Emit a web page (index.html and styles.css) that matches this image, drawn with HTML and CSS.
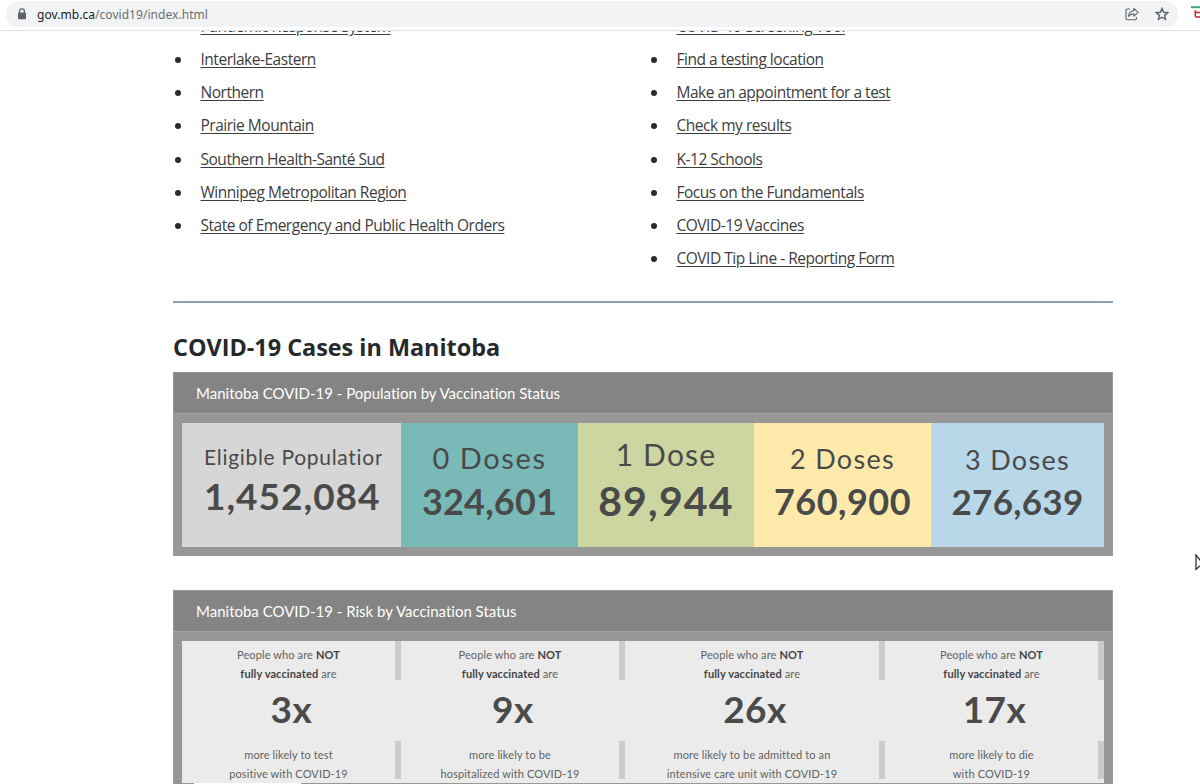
FILE: index.html
```
<!DOCTYPE html>
<html lang="en">
<head>
    <meta charset="UTF-8">
    <title>COVID-19 - Province of Manitoba</title>
    <link rel="stylesheet" href="styles.css">
</head>
<body>
    <header class="toolbar">
        <div class="address-bar">
            <svg class="lock" width="10" height="12" viewBox="0 0 10 12">
                <path d="M2.6 5V3.2a2.4 2.4 0 0 1 4.8 0V5" fill="none" stroke="#5f6368" stroke-width="1.3"/>
                <rect x="1" y="4.4" width="8" height="6.8" rx="0.8" fill="#5f6368"/>
            </svg>
            <span class="url"><b>gov.mb.ca</b>/covid19/index.html</span>
            <svg class="share" width="14" height="14" viewBox="0 0 14 14" fill="none" stroke="#5f6368" stroke-width="1.1" stroke-linejoin="round">
                <path d="M5 2H2.200A1.200 1.200 0 0 0 1 3.200v8.300a1.200 1.200 0 0 0 1.200 1.200h8a1.200 1.200 0 0 0 1.200-1.200V10"/>
                <path d="M8.800 1.500l4.400 3.800-4.400 3.800V6.900C6.300 6.800 4.800 7.700 3.500 9.400 3.800 6.200 5.600 4 8.800 3.700z"/>
            </svg>
            <svg class="star" width="14" height="14" viewBox="0 0 14 14" fill="none" stroke="#5f6368" stroke-width="1.4" stroke-linejoin="miter">
                <path d="M7 1.500l1.600 3.800 4.100.35-3.100 2.700.93 4L7 10.200l-3.530 2.150.93-4-3.100-2.700 4.100-.35z"/>
            </svg>
        </div>
        <svg class="extension" width="9" height="14" viewBox="0 0 9 14" fill="none">
            <path d="M0 1.200h9" stroke="#3fa37c" stroke-width="2"/>
            <path d="M3.700 4.500l1.500 2h4M4.300 5v5q0 1 1.500 1h4" stroke="#c0272d" stroke-width="1.500"/>
        </svg>
    </header>

    <main class="page">
        <div class="columns">
            <ul class="links">
                <li><a href="#">Pandemic Response System</a></li>
                <li><a href="#">Interlake-Eastern</a></li>
                <li><a href="#">Northern</a></li>
                <li><a href="#">Prairie Mountain</a></li>
                <li><a href="#">Southern Health-Santé Sud</a></li>
                <li><a href="#">Winnipeg Metropolitan Region</a></li>
                <li><a href="#">State of Emergency and Public Health Orders</a></li>
            </ul>
            <ul class="links">
                <li><a href="#">COVID-19 Screening Tool</a></li>
                <li><a href="#">Find a testing location</a></li>
                <li><a href="#">Make an appointment for a test</a></li>
                <li><a href="#">Check my results</a></li>
                <li><a href="#">K-12 Schools</a></li>
                <li><a href="#">Focus on the Fundamentals</a></li>
                <li><a href="#">COVID-19 Vaccines</a></li>
                <li><a href="#">COVID Tip Line - Reporting Form</a></li>
            </ul>
        </div>

        <h2>COVID-19 Cases in Manitoba</h2>

        <section class="panel population">
            <h3 class="population-title">Manitoba COVID-19 - Population by Vaccination Status</h3>
            <div class="doses">
                <div class="dose eligible">
                    <span class="label">Eligible Population</span>
                    <span class="count">1,452,084</span>
                </div>
                <div class="dose zero">
                    <span class="label">0 Doses</span>
                    <span class="count">324,601</span>
                </div>
                <div class="dose one">
                    <span class="label">1 Dose</span>
                    <span class="count">89,944</span>
                </div>
                <div class="dose two">
                    <span class="label">2 Doses</span>
                    <span class="count">760,900</span>
                </div>
                <div class="dose three">
                    <span class="label">3 Doses</span>
                    <span class="count">276,639</span>
                </div>
            </div>
        </section>

        <section class="panel risk">
            <h3>Manitoba COVID-19 - Risk by Vaccination Status</h3>
            <div class="risks">
                <div class="risk-card">
                    <p class="who">People who are <b>NOT</b><br><b>fully vaccinated</b> are</p>
                    <p class="times">3x</p>
                    <p class="outcome">more likely to test<br>positive with COVID-19</p>
                </div>
                <div class="risk-card">
                    <p class="who">People who are <b>NOT</b><br><b>fully vaccinated</b> are</p>
                    <p class="times">9x</p>
                    <p class="outcome">more likely to be<br>hospitalized with COVID-19</p>
                </div>
                <div class="risk-card">
                    <p class="who">People who are <b>NOT</b><br><b>fully vaccinated</b> are</p>
                    <p class="times">26x</p>
                    <p class="outcome">more likely to be admitted to an<br>intensive care unit with COVID-19</p>
                </div>
                <div class="risk-card">
                    <p class="who">People who are <b>NOT</b><br><b>fully vaccinated</b> are</p>
                    <p class="times">17x</p>
                    <p class="outcome">more likely to die<br>with COVID-19</p>
                </div>
            </div>
            <div class="tab"></div>
        </section>
    </main>

    <!-- Mouse pointer -->
    <svg class="pointer" width="5" height="18" viewBox="0 0 5 18">
        <path d="M1 1v14.500l3.400-3.100H10z" fill="#fff" stroke="#222" stroke-width="1.200"/>
    </svg>
</body>
</html>
```
FILE: styles.css
```
body {
    font-family: "Open Sans", sans-serif;
    color: #2b2b2b;
    background-color: #fff;
    margin: 0;
    height: 784px;
    display: flex;
    flex-direction: column;
    overflow: hidden;
}

/* Browser bar */
.toolbar {
    flex: none;
    display: flex;
    align-items: flex-start;
    height: 30px;
    border-bottom: 1px solid #dfe1e4;
}

.address-bar {
    display: flex;
    align-items: center;
    box-sizing: border-box;
    width: 1172px;
    height: 26px;
    margin: 1px 13px 0 6px;
    padding: 0 9px 0 11px;
    border-radius: 13px;
    background-color: #f1f3f4;
}

.url {
    flex: 1;
    margin-left: 10px;
    font-family: "Noto Sans", sans-serif;
    font-size: 12px;
    letter-spacing: 0.05px;
    color: #6b6f73;
}

.url b {
    font-weight: normal;
    color: #202124;
}

.star {
    margin-left: 16px;
}

.extension {
    margin-top: 6px;
}

.page {
    flex: 1;
    width: 940px;
    margin-left: 173px;
    overflow: hidden;
}

.columns {
    display: grid;
    grid-template-columns: 476px 1fr;
    box-sizing: border-box;
    height: 272px;
    border-bottom: 2px solid #8ba0b6;
}

.links {
    margin: -21.5px 0 0;
    padding: 0;
    list-style: none;
}

.links li {
    display: flex;
    align-items: center;
    height: 33.15px;
    font-size: 15.5px;
    white-space: nowrap;
}

.links li::before {
    content: "";
    width: 6px;
    height: 6px;
    margin: 2px 19.5px 0 2px;
    border-radius: 50%;
    background-color: #2b2b2b;
}

.links a {
    color: #3d3d3d;
    letter-spacing: -0.48px;
    text-underline-offset: 2px;
}

h2 {
    margin: 28px 0 9px;
    font-size: 23.4px;
    line-height: 32px;
    font-weight: bold;
    color: #26292c;
}

/* Dashboard panels */
.panel {
    box-sizing: border-box;
    border: 1px solid #979797;
    background-color: #979797;
    font-family: Lato, sans-serif;
    font-variant-ligatures: none;
    color: #4a4a4a;
}

.panel h3 {
    margin: 0;
    padding-left: 22px;
    height: 41px;
    line-height: 40px;
    font-size: 15px;
    font-weight: normal;
    color: #fff;
    background-color: #848484;
    border-bottom: 1px solid #a5a5a5;
    box-sizing: border-box;
}

.population {
    height: 184px;
}

.doses {
    display: grid;
    grid-template-columns: 219px 177px 176px 177px 173px;
    height: 124px;
    margin: 9px 8px 8px;
}

.dose {
    display: flex;
    flex-direction: column;
    align-items: center;
    white-space: nowrap;
}

.label {
    height: 40px;
    line-height: 40px;
    font-size: 27px;
    letter-spacing: 1.3px;
}

.count {
    height: 44px;
    line-height: 44px;
    font-size: 36px;
    font-weight: bold;
    letter-spacing: 0.5px;
}

.eligible {
    align-items: flex-start;
    padding: 14px 19px 0 22px;
    background-color: #d6d6d6;
}

.eligible .label {
    width: 178px;
    height: 37px;
    overflow: hidden;
    font-size: 21px;
    letter-spacing: 0.7px;
}

.eligible .count {
    font-size: 37px;
    letter-spacing: 1px;
}

.zero {
    padding-top: 15px;
    background-color: #79bab8;
}

.zero .label {
    height: 41px;
    font-size: 29px;
    letter-spacing: 1.6px;
}

.zero .count {
    letter-spacing: 0.2px;
}

.one {
    padding-top: 11px;
    background-color: #cdd5a1;
}

.one .label {
    height: 45px;
    font-size: 30px;
    letter-spacing: 1.2px;
}

.one .count {
    font-size: 41px;
    letter-spacing: 1.2px;
}

.two {
    padding-top: 16px;
    background-color: #fde9aa;
}

.three {
    padding-top: 17px;
    background-color: #b8d8ea;
}

.three .label {
    height: 39px;
}

.three .count {
    font-size: 35px;
    letter-spacing: 0.3px;
}

.risk {
    margin-top: 34px;
    height: 220px;
}

.risks {
    display: grid;
    grid-template-columns: 219px 224px 260px 219px;
    height: 142px;
    margin: 9px 8px 0;
    background-color: #ebebeb;
}

.risk-card {
    box-sizing: border-box;
    padding-right: 6px;
    text-align: center;
    background-image: linear-gradient(#cbcbcb, #cbcbcb), linear-gradient(#cbcbcb, #cbcbcb);
    background-size: 6px 39px, 6px 38px;
    background-position: right 0 top 0, right 0 top 100px;
    background-repeat: no-repeat;
}

.risk-card p {
    margin: 0;
    font-size: 11px;
    line-height: 19px;
    letter-spacing: 0.12px;
    color: #626262;
}

.risk-card p b {
    color: #444;
}

.risk-card .who {
    padding-top: 4px;
}

.risk-card .times {
    height: 62px;
    padding-left: 6px;
    line-height: 51px;
    font-size: 37px;
    font-weight: bold;
    letter-spacing: 0.5px;
    color: #4a4a4a;
}

/* Sheet tab below the cards */
.tab {
    width: 107px;
    height: 20px;
    margin-left: 20px;
    background-color: #fff;
}

.pointer {
    position: absolute;
    left: 1195px;
    top: 554px;
}
```
